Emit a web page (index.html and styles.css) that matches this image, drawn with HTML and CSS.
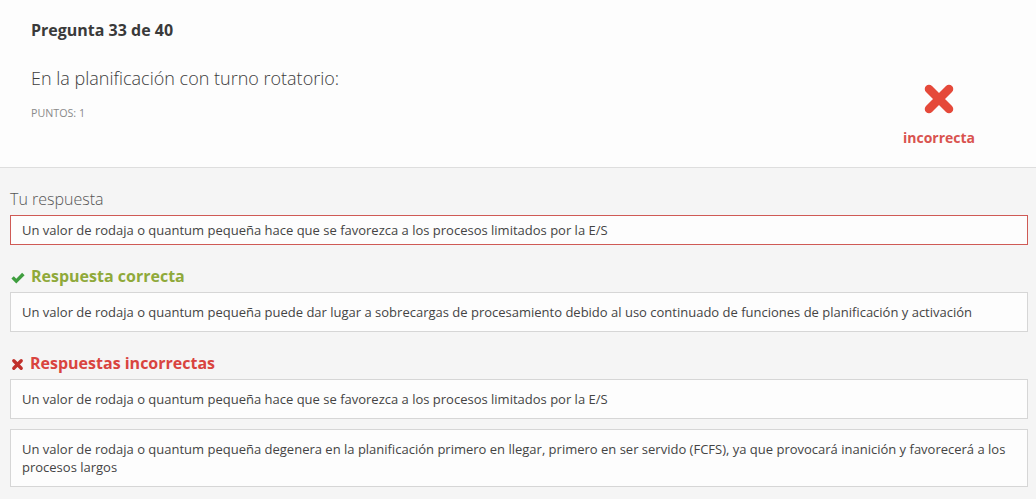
FILE: index.html
```html
<!DOCTYPE html>
<html lang="es">
<head>
<meta charset="utf-8">
<title>Pregunta 33 de 40</title>
<link rel="stylesheet" href="styles.css">
</head>
<body>
<div class="page">
  <header class="question">
    <div class="question-main">
      <h2 class="question-number">Pregunta 33 de 40</h2>
      <p class="question-text">En la planificación con turno rotatorio:</p>
      <p class="question-points">PUNTOS: 1</p>
    </div>
    <div class="question-result">
      <svg class="result-icon" viewBox="0 0 34 34" width="34" height="34" aria-hidden="true">
        <path d="M7 7 L27 27 M27 7 L7 27" stroke="#e5493a" stroke-width="8.5" stroke-linecap="round" fill="none"/>
      </svg>
      <span class="result-label">incorrecta</span>
    </div>
  </header>
  <section class="answers">
    <div class="label">Tu respuesta</div>
    <div class="answer answer-user">Un valor de rodaja o quantum pequeña hace que se favorezca a los procesos limitados por la E/S</div>

    <h3 class="group-title correct">
      <svg class="group-icon" viewBox="0 0 14 12" width="14" height="12" aria-hidden="true">
        <path d="M0.4 6.6 L2.8 4.2 L5.3 6.7 L11.1 0.8 L13.6 3.2 L5.3 11.4 Z" fill="#3f9e3f"/>
      </svg>
      Respuesta correcta
    </h3>
    <div class="answer">Un valor de rodaja o quantum pequeña puede dar lugar a sobrecargas de procesamiento debido al uso continuado de funciones de planificación y activación</div>

    <h3 class="group-title incorrect">
      <svg class="group-icon" viewBox="0 0 14 14" width="13" height="13" aria-hidden="true">
        <path d="M3 3 L11 11 M11 3 L3 11" stroke="#c0302b" stroke-width="3.6" stroke-linecap="round" fill="none"/>
      </svg>
      Respuestas incorrectas
    </h3>
    <div class="answer">Un valor de rodaja o quantum pequeña hace que se favorezca a los procesos limitados por la E/S</div>
    <div class="answer">Un valor de rodaja o quantum pequeña degenera en la planificación primero en llegar, primero en ser servido (FCFS), ya que provocará inanición y favorecerá a los procesos largos</div>
  </section>
</div>
</body>
</html>
```

FILE: styles.css
```css
* { box-sizing: border-box; }
html, body {
  margin: 0;
  padding: 0;
  background: #f5f5f5;
  font-family: "Open Sans", "Noto Sans", sans-serif;
  color: #444;
}
.page {
  width: 1036px;
  min-height: 499px;
  background: #f5f5f5;
}
.question {
  display: flex;
  justify-content: space-between;
  background: #fdfdfd;
  border-bottom: 1px solid #dedede;
  height: 168px;
  padding: 19px 0 0 31px;
}
.question-number {
  margin: 0;
  font-size: 16px;
  line-height: 22px;
  font-weight: 700;
  color: #3a3a3a;
}
.question-text {
  margin: 25px 0 0;
  font-size: 18px;
  line-height: 24px;
  font-weight: 300;
  color: #3c3c3c;
}
.question-points {
  margin: 16px 0 0;
  font-size: 10.7px;
  line-height: 14px;
  color: #8a8a8a;
}
.question-result {
  width: 140px;
  margin-right: 27px;
  padding-top: 63px;
  display: flex;
  flex-direction: column;
  align-items: center;
}
.result-icon { display: block; }
.result-label {
  margin-top: 13px;
  font-size: 14px;
  line-height: 18px;
  font-weight: 700;
  color: #d9534f;
}
.answers {
  padding: 20px 8px 12px 10px;
}
.label {
  font-size: 16px;
  line-height: 22px;
  font-weight: 300;
  color: #555;
  margin-bottom: 5px;
}
.answer {
  background: #fdfdfd;
  border: 1px solid #d6d6d6;
  padding: 10px 11px;
  font-size: 13px;
  line-height: 18px;
  color: #444;
}
.answer + .answer { margin-top: 10px; }
.answer-user {
  border-color: #cf5a55;
  padding: 5px 11px;
}
.group-title {
  display: flex;
  align-items: center;
  gap: 6px;
  margin: 20px 0 5px;
  padding-left: 1px;
  font-size: 16px;
  line-height: 22px;
  font-weight: 700;
}
.group-icon { display: block; margin-top: 3px; }
.group-title.correct { color: #8fa93a; }
.group-title.incorrect { color: #d9443f; }
```
